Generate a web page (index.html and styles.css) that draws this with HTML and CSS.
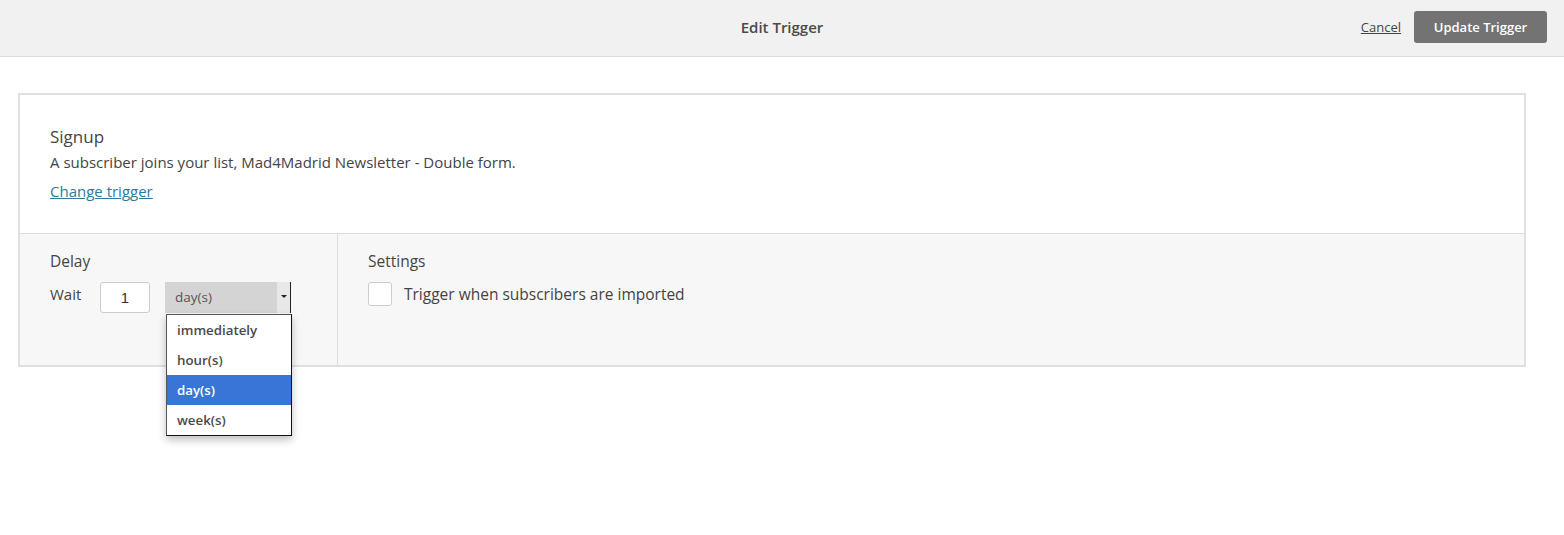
FILE: index.html
```html
<!DOCTYPE html>
<html lang="en">
<head>
   <meta charset="UTF-8">
   <meta name="viewport" content="width=device-width, initial-scale=1.0">
   <title>Edit Trigger</title>
   <link rel="stylesheet" href="styles.css">
</head>
<body>
   <header class="topbar">
      <h1 class="topbar-title">Edit Trigger</h1>
      <div class="topbar-actions">
         <a href="#" class="cancel-link">Cancel</a>
         <button type="button" class="update-button">Update Trigger</button>
      </div>
   </header>

   <main class="content">
      <div class="trigger-card">
         <div class="trigger-summary">
            <h2>Signup</h2>
            <p>A subscriber joins your list, Mad4Madrid Newsletter - Double form.</p>
            <a href="#" class="change-link">Change trigger</a>
         </div>
         <div class="trigger-options">
            <div class="delay-col">
               <h3>Delay</h3>
               <div class="wait-row">
                  <span class="wait-label">Wait</span>
                  <input type="text" class="wait-input" value="1">
                  <div class="unit-select">
                     <div class="unit-current">
                        <span>day(s)</span>
                        <span class="unit-arrow"></span>
                     </div>
                     <ul class="unit-menu">
                        <li>immediately</li>
                        <li>hour(s)</li>
                        <li class="selected">day(s)</li>
                        <li>week(s)</li>
                     </ul>
                  </div>
               </div>
            </div>
            <div class="settings-col">
               <h3>Settings</h3>
               <label class="check-row">
                  <span class="checkbox"></span>
                  <span>Trigger when subscribers are imported</span>
               </label>
            </div>
         </div>
      </div>
   </main>
</body>
</html>
```

FILE: styles.css
```css
html, body {
   min-height: 100vh;
}
body {
   font-family: 'Open Sans', 'Noto Sans', sans-serif;
   background-color: #fff;
   color: #444;
   margin: 0;
}

/* Header bar */
.topbar {
   position: relative;
   box-sizing: border-box;
   height: 57px;
   padding-bottom: 2px;
   background-color: #f1f1f1;
   border-bottom: 1px solid #dedede;
   display: flex;
   align-items: center;
   justify-content: center;
}
.topbar-title {
   margin: 0;
   font-size: 15px;
   font-weight: 600;
   color: #4a4a4a;
}
.topbar-actions {
   position: absolute;
   right: 17px;
   top: 11px;
   display: flex;
   align-items: center;
   gap: 13px;
}
.cancel-link {
   font-size: 13px;
   color: #444;
   text-decoration: underline;
}
.update-button {
   background-color: #737373;
   color: #fff;
   border: none;
   border-radius: 3px;
   height: 32px;
   width: 133px;
   font-family: inherit;
   font-size: 13px;
   font-weight: 600;
   cursor: pointer;
}

/* Card */
.content {
   padding: 36px 38px 0 18px;
}
.trigger-card {
   border: 2px solid #e0e0e0;
   background-color: #fff;
}
.trigger-summary {
   padding: 30px 30px 31px;
   border-bottom: 1px solid #dcdcdc;
}
.trigger-summary h2 {
   margin: 0;
   font-size: 17px;
   font-weight: 400;
   line-height: 24px;
   color: #444;
}
.trigger-summary p {
   margin: 2px 0 7px;
   font-size: 15px;
   line-height: 22px;
   color: #444;
}
.change-link {
   display: inline-block;
   font-size: 15px;
   line-height: 22px;
   color: #2b7c96;
   text-decoration: underline;
}

.trigger-options {
   display: flex;
   background-color: #f7f7f7;
   height: 131px;
}
.trigger-options h3 {
   margin: 0 0 10px;
   font-size: 15.5px;
   font-weight: 400;
   line-height: 22px;
   color: #444;
}
.delay-col {
   width: 287px;
   padding: 16px 0 0 30px;
   border-right: 1px solid #dcdcdc;
}
.settings-col {
   padding: 16px 30px 0;
}

.wait-row {
   display: flex;
   align-items: flex-start;
}
.wait-label {
   font-size: 15px;
   line-height: 22px;
   margin-top: 1px;
   width: 50px;
}
.wait-input {
   box-sizing: border-box;
   width: 50px;
   height: 31px;
   border: 1px solid #ccc;
   border-radius: 3px;
   background: #fff;
   text-align: center;
   font-family: 'Liberation Sans', Arial, sans-serif;
   font-size: 15px;
   color: #333;
   padding: 0;
   margin-right: 15px;
}

/* Unit dropdown */
.unit-select {
   position: relative;
   width: 126px;
}
.unit-current {
   display: flex;
   justify-content: space-between;
   height: 31px;
   background-color: #d4d4d4;
   font-size: 13.5px;
   line-height: 31px;
   color: #555;
}
.unit-current span:first-child {
   padding-left: 10px;
}
.unit-arrow {
   width: 13px;
   background-color: #e8e8e8;
   border-right: 1px solid #222;
   position: relative;
}
.unit-arrow::after {
   content: "";
   position: absolute;
   left: 4px;
   top: 13px;
   border-left: 3px solid transparent;
   border-right: 3px solid transparent;
   border-top: 3px solid #222;
}
.unit-menu {
   position: absolute;
   top: 32px;
   left: 1px;
   width: 124px;
   margin: 0;
   padding: 0;
   list-style: none;
   background: #fff;
   border: 1px solid #555;
   border-right-color: #111;
   border-bottom-color: #111;
   box-shadow: 0 4px 8px rgba(0, 0, 0, 0.25);
   z-index: 10;
}
.unit-menu li {
   height: 30px;
   line-height: 30px;
   padding-left: 10px;
   font-size: 13.3px;
   font-weight: 600;
   color: #4a4a4a;
}
.unit-menu li.selected {
   background-color: #3875d7;
   color: #fff;
}

/* Checkbox */
.check-row {
   display: flex;
   align-items: center;
   gap: 12px;
   font-size: 15.5px;
   color: #444;
}
.checkbox {
   box-sizing: border-box;
   width: 24px;
   height: 24px;
   border: 1px solid #ccc;
   border-radius: 3px;
   background: #fff;
}
```
